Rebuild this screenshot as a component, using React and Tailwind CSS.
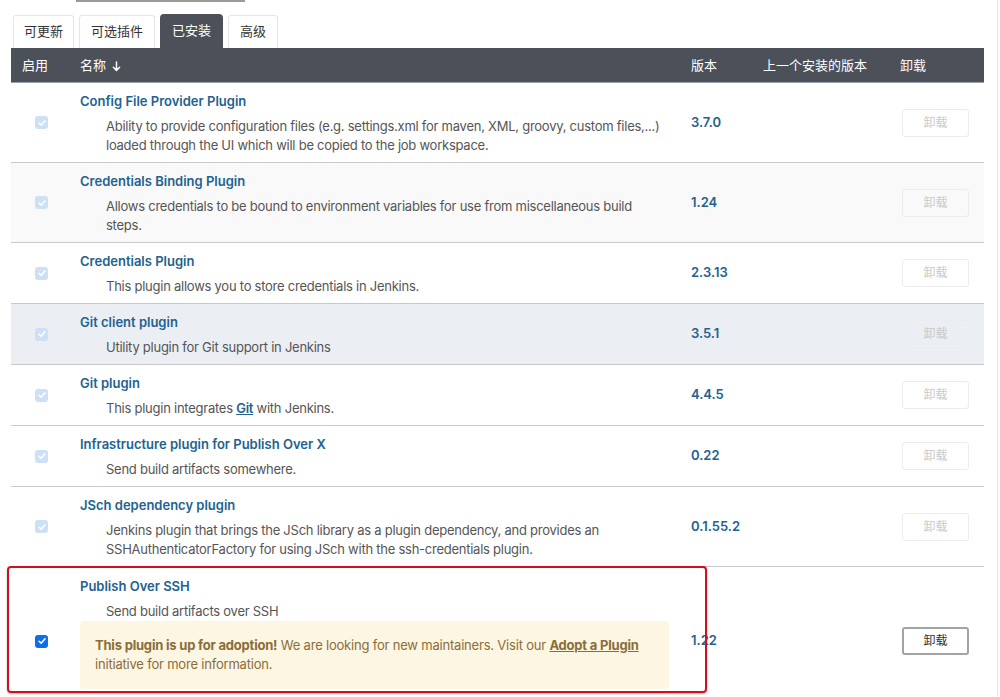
import { useState } from 'react'

const plugins = [
  { name: 'Config File Provider Plugin', desc: 'Ability to provide configuration files (e.g. settings.xml for maven, XML, groovy, custom files,...) loaded through the UI which will be copied to the job workspace.', version: '3.7.0', bg: 'bg-white' },
  { name: 'Credentials Binding Plugin', desc: 'Allows credentials to be bound to environment variables for use from miscellaneous build steps.', version: '1.24', bg: 'bg-[#f9f9f9]' },
  { name: 'Credentials Plugin', desc: 'This plugin allows you to store credentials in Jenkins.', version: '2.3.13', bg: 'bg-white' },
  { name: 'Git client plugin', desc: 'Utility plugin for Git support in Jenkins', version: '3.5.1', bg: 'bg-[#ebeff3]' },
  { name: 'Git plugin', desc: 'git', version: '4.4.5', bg: 'bg-white' },
  { name: 'Infrastructure plugin for Publish Over X', desc: 'Send build artifacts somewhere.', version: '0.22', bg: 'bg-white' },
  { name: 'JSch dependency plugin', desc: 'Jenkins plugin that brings the JSch library as a plugin dependency, and provides an SSHAuthenticatorFactory for using JSch with the ssh-credentials plugin.', version: '0.1.55.2', bg: 'bg-white' },
]

const tabs = [
  { label: '可更新', w: 'w-[61px]' },
  { label: '可选插件', w: 'w-[76px]' },
  { label: '已安装', w: 'w-[63px]' },
  { label: '高级', w: 'w-[50px]' },
]

function Check({ on }) {
  return (
    <span className={`inline-flex h-[13px] w-[13px] items-center justify-center rounded-[3px] ${on ? 'bg-[#0f6fe8]' : 'bg-[#cde0f6]'}`}>
      <svg viewBox="0 0 12 12" className="h-[10px] w-[10px]"><path d="M2.5 6.3 L5 8.6 L9.6 3.4" fill="none" stroke="#fff" strokeWidth="1.9" strokeLinecap="round" strokeLinejoin="round" /></svg>
    </span>
  )
}

function Row({ p }) {
  return (
    <div className={`grid grid-cols-[69px_611px_72px_136px_85px] border-b border-[#c9c9c9] ${p.bg}`}>
      <div className="flex items-center pl-[24px]"><Check /></div>
      <div className="pt-[8px] pb-[7px]">
        <div className="text-[13px] font-semibold text-[#22628f] leading-[20px]">{p.name}</div>
        <div className="mt-[6px] pl-[26px] pr-[25px] text-[13px] leading-[19px] tracking-[-0.25px] text-[#555]">
          {p.desc === 'git' ? (<>This plugin integrates <span className="font-semibold text-[#22628f] underline">Git</span> with Jenkins.</>) : p.desc}
        </div>
      </div>
      <div className="flex items-center text-[13px] font-semibold text-[#22628f]">{p.version}</div>
      <div />
      <div className="flex items-center pl-[3px]">
        <button className="h-[28px] w-[67px] rounded-[3px] border border-[#ececec] text-[12px] text-[#c9c9c9]">卸载</button>
      </div>
    </div>
  )
}

export default function App() {
  const [tab] = useState('已安装')
  return (
    <div className="relative h-[697px] w-[1000px] overflow-hidden bg-white font-['Inter','Noto_Sans_CJK_SC',sans-serif] text-[13px]">
      <div className="ml-[76px] h-[2px] w-[169px] bg-[#9a9a9a]" />
      <div className="absolute right-[2px] top-0 h-full w-px bg-[#e8e8e8]" />
      <div className="mt-[12px] ml-[13px] flex items-end gap-[5px]">
        {tabs.map(t => (
          <div key={t.label} className={t.label === tab
            ? `flex h-[34px] items-center justify-center rounded-t-[4px] bg-[#4b5059] text-white ${t.w}`
            : `flex h-[33px] items-center justify-center rounded-t-[3px] border border-b-0 border-[#e6e6e6] text-[#333] ${t.w}`}>
            {t.label}
          </div>
        ))}
      </div>
      <div className="ml-[11px] w-[973px]">
        <div className="grid h-[35px] grid-cols-[69px_611px_72px_136px_85px] items-center border-b border-[#9ea2a8] bg-[#4b5059] pt-[2px] text-[13px] text-white">
          <div className="pl-[11px]">启用</div>
          <div className="flex items-center gap-[6px]">名称<svg viewBox="0 0 10 12" className="h-[11px] w-[9px]"><path d="M5 1 V10 M1.5 6.8 L5 10.3 L8.5 6.8" fill="none" stroke="#fff" strokeWidth="1.6" strokeLinecap="round" strokeLinejoin="round" /></svg></div>
          <div>版本</div>
          <div>上一个安装的版本</div>
          <div className="pl-[1px]">卸载</div>
        </div>
        {plugins.map(p => <Row key={p.name} p={p} />)}
        <div className="grid grid-cols-[69px_611px_72px_136px_85px] bg-white">
          <div className="flex items-center pl-[24px]"><Check on /></div>
          <div className="pt-[9px] pb-[26px]">
            <div className="text-[13px] font-semibold text-[#22628f] leading-[20px]">Publish Over SSH</div>
            <div className="mt-[6px] pl-[26px] text-[13px] leading-[19px] tracking-[-0.25px] text-[#555]">Send build artifacts over SSH</div>
            <div className="mr-[22px] rounded-[4px] bg-[#fdf6e2] px-[15px] py-[15px] text-[13px] leading-[19px] tracking-[-0.2px] text-[#8a6d3b]">
              <span className="font-bold">This plugin is up for adoption!</span> We are looking for new maintainers. Visit our <span className="font-bold underline">Adopt a Plugin</span> initiative for more information.
            </div>
          </div>
          <div className="flex items-center text-[13px] font-semibold text-[#22628f]">1.22</div>
          <div />
          <div className="flex items-center pl-[3px]">
            <button className="h-[28px] w-[67px] rounded-[3px] border-2 border-[#a3a3a3] text-[12px] text-[#333]">卸载</button>
          </div>
        </div>
      </div>
      <div className="absolute left-[7px] top-[566px] h-[127px] w-[700px] rounded-[4px] border-2 border-[#d0101f] shadow-[0_1px_2px_rgba(0,0,0,0.3)]" />
    </div>
  )
}
